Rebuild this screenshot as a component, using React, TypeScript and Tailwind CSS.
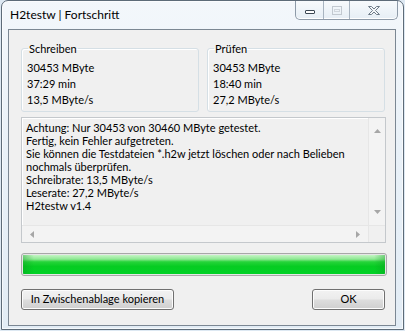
import React from 'react';

const ui = "font-['Lato','Open_Sans',sans-serif] text-[11px] text-black";

// Win7 style caption buttons (min / max disabled / close)
const CaptionButtons = () => (
  <div className="flex h-[19px] rounded-b-[5px] border border-t-0 border-[#8d9aa8] bg-[linear-gradient(180deg,#f7fafc,#e6eef5)] shadow-[inset_0_-1px_0_#ffffff]">
    <div className="flex w-[28px] items-center justify-center border-r border-[#a8b4c0]">
      <div className="mt-[3px] h-[4px] w-[10px] rounded-[1px] border border-[#3b4753] bg-white" />
    </div>
    <div className="flex w-[26px] items-center justify-center border-r border-[#a8b4c0]">
      <div className="flex h-[9px] w-[10px] items-center justify-center border border-[#c2c9d0]">
        <div className="h-[3px] w-[6px] border border-[#d0d6dc]" />
      </div>
    </div>
    <div className="flex w-[47px] items-center justify-center">
      <svg width="14" height="11" viewBox="0 0 14 11">
        <path
          d="M1.5 1.5h3l2.5 2.5 2.5-2.5h3l-4 4 4 4h-3L7 7 4.5 9.5h-3l4-4z"
          fill="#f4f6f8"
          stroke="#6e7b88"
          strokeWidth="1"
          strokeLinejoin="round"
        />
      </svg>
    </div>
  </div>
);

const Group = ({ title, lines }: { title: string; lines: string[] }) => (
  <fieldset className="m-0 rounded-[3px] border border-[#d5dfe5] px-[5px] pb-[3px] pt-[4px] shadow-[inset_1px_1px_0_#ffffff]">
    <legend className="ml-[1px] px-[1px] leading-[15px]">{title}</legend>
    {lines.map((l) => (
      <div key={l} className="leading-[16px]">
        {l}
      </div>
    ))}
  </fieldset>
);

const Arrow = ({ dir }: { dir: 'up' | 'down' | 'left' | 'right' }) => {
  const pts = {
    up: '0,4 3.5,0 7,4',
    down: '0,0 3.5,4 7,0',
    left: '4,0 0,3.5 4,7',
    right: '0,0 4,3.5 0,7',
  }[dir];
  const vert = dir === 'up' || dir === 'down';
  return (
    <svg width={vert ? 7 : 4} height={vert ? 4 : 7} viewBox={vert ? '0 0 7 4' : '0 0 4 7'}>
      <polygon points={pts} fill="#a6a6a6" />
    </svg>
  );
};

const Btn = ({ children, className }: { children: React.ReactNode; className: string }) => (
  <button
    className={`flex h-[21px] items-center justify-center rounded-[3px] border border-[#707070] bg-[linear-gradient(180deg,#f2f2f2_0%,#ebebeb_48%,#dddddd_52%,#cfcfcf_100%)] shadow-[inset_0_0_0_1px_#fcfcfc] ${className}`}
  >
    {children}
  </button>
);

const report = [
  'Achtung: Nur 30453 von 30460 MByte getestet.',
  'Fertig, kein Fehler aufgetreten.',
  'Sie können die Testdateien *.h2w jetzt löschen oder nach Belieben',
  'nochmals überprüfen.',
  'Schreibrate: 13,5 MByte/s',
  'Leserate: 27,2 MByte/s',
  'H2testw v1.4',
];

export default function App() {
  return (
    <div className={`h-[331px] w-[405px] overflow-hidden bg-[#dde8f2] ${ui}`}>
      <div className="ml-[1px] flex h-[330px] w-[403px] flex-col rounded-t-[7px] border border-[#5d6b78] bg-[linear-gradient(180deg,#f3f7fb_0%,#e9f1f8_45%,#e2ecf5_100%)] shadow-[inset_0_0_0_1px_#ffffffaa]">
        {/* title bar */}
        <div className="flex h-[28px] items-start justify-between">
          <div className="pl-[8px] pt-[6px] text-[12px] leading-[16px]">H2testw | Fortschritt</div>
          <div className="mr-[5px]">
            <CaptionButtons />
          </div>
        </div>

        {/* client area */}
        <div className="ml-[6px] flex h-[297px] w-[388px] flex-col border border-[#7b8793] bg-[#f0f0f0] pl-[12px] pr-[10px] pt-[11px]">
          <div className="grid w-[364px] grid-cols-[178px_178px] gap-[8px]">
            <Group title="Schreiben" lines={['30453 MByte', '37:29 min', '13,5 MByte/s']} />
            <Group title="Prüfen" lines={['30453 MByte', '18:40 min', '27,2 MByte/s']} />
          </div>

          {/* report text box */}
          <div className="mt-[5px] flex h-[126px] w-[365px] flex-col border border-[#c4c8cc] shadow-[inset_1px_1px_0_#ffffff]">
            <div className="flex min-h-0 flex-1">
              <div className="flex-1 pl-[4px] pt-[3px] leading-[13px]">
                {report.map((l) => (
                  <div key={l} className="whitespace-nowrap">
                    {l}
                  </div>
                ))}
              </div>
              <div className="flex w-[17px] flex-col items-center justify-between border-l border-[#e6e6e6] bg-[#f3f3f3] py-[11px]">
                <Arrow dir="up" />
                <Arrow dir="down" />
              </div>
            </div>
            <div className="flex h-[17px] border-t border-[#e6e6e6]">
              <div className="flex flex-1 items-center justify-between bg-[#f3f3f3] px-[8px]">
                <Arrow dir="left" />
                <Arrow dir="right" />
              </div>
              <div className="w-[17px] border-l border-[#e6e6e6] bg-[#f0f0f0]" />
            </div>
          </div>

          {/* progress bar */}
          <div className="mt-[10px] h-[23px] w-[366px] rounded-[3px] border border-[#a8a8a8] bg-[#e6e6e6] p-[1px]">
            <div className="relative h-full w-full rounded-[1px] bg-[linear-gradient(180deg,#c4f5c4_0%,#8fe893_22%,#26d43a_36%,#06cc22_60%,#00d226_100%)]">
              <div className="absolute inset-0 bg-[linear-gradient(90deg,#0a9a1f66_0%,transparent_3%,transparent_97%,#0a9a1f66_100%)]" />
            </div>
          </div>

          {/* buttons */}
          <div className="mt-[13px] flex w-[364px] justify-between">
            <Btn className="w-[153px]">In Zwischenablage kopieren</Btn>
            <Btn className="w-[73px]">OK</Btn>
          </div>
        </div>
      </div>
    </div>
  );
}
